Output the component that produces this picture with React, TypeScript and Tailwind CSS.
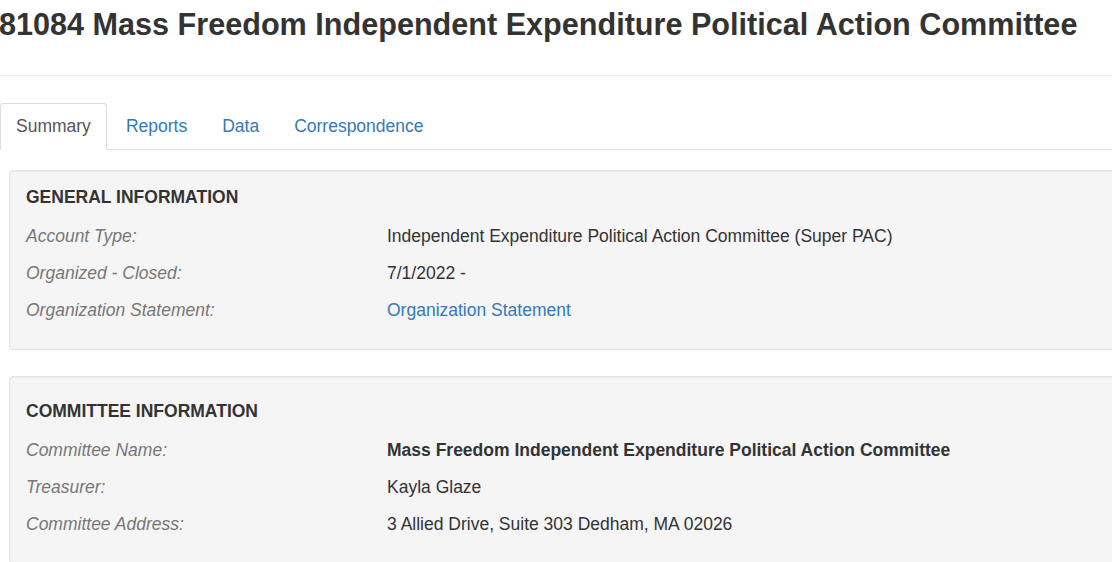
import React from 'react';

const tabs = ['Summary', 'Reports', 'Data', 'Correspondence'];

type Row = { label: string; value: React.ReactNode };

const generalRows: Row[] = [
  { label: 'Account Type:', value: 'Independent Expenditure Political Action Committee (Super PAC)' },
  { label: 'Organized - Closed:', value: '7/1/2022 -' },
  {
    label: 'Organization Statement:',
    value: <a className="text-[#337ab7]" href="#">Organization Statement</a>,
  },
];

const committeeRows: Row[] = [
  {
    label: 'Committee Name:',
    value: <span className="font-bold">Mass Freedom Independent Expenditure Political Action Committee</span>,
  },
  { label: 'Treasurer:', value: 'Kayla Glaze' },
  { label: 'Committee Address:', value: '3 Allied Drive, Suite 303 Dedham, MA 02026' },
];

const InfoWell: React.FC<{ title: string; rows: Row[]; spacing: string }> = ({ title, rows, spacing }) => (
  <section
    className={`ml-[9px] rounded-[4px] border border-[#e3e3e3] bg-[#f5f5f5] pl-4 shadow-[inset_0_1px_1px_rgba(0,0,0,0.05)] ${spacing}`}
  >
    <h4 className="mb-[8px] text-[17.5px] font-bold leading-[25px] text-[#333]">{title}</h4>
    {rows.map((row) => (
      <div key={row.label} className="flex h-[37px] items-center">
        <div className="w-[361px] italic text-[#777]">{row.label}</div>
        <div className="text-[#333]">{row.value}</div>
      </div>
    ))}
  </section>
);

export default function App() {
  return (
    <div className="h-[562px] w-[1112px] overflow-hidden bg-white font-['Liberation_Sans',Arial,sans-serif] text-[17.5px] leading-[25px] text-[#333]">
      <div className="w-[1150px]">
        <h1 className="-ml-[1px] whitespace-nowrap pt-[8px] text-[30.6px] font-bold leading-[33px] text-[#333]">
          81084 Mass Freedom Independent Expenditure Political Action Committee
        </h1>
        <hr className="mt-[34px] border-t border-[#eee]" />

        <ul className="mt-[27px] flex border-b border-[#ddd]">
          {tabs.map((tab, i) => (
            <li key={tab} className="-mb-px mr-[3px]">
              {i === 0 ? (
                <span className="block rounded-t-[4px] border border-[#ddd] border-b-transparent bg-white px-[15px] py-[10px] text-[#555]">
                  {tab}
                </span>
              ) : (
                <a href="#" className="block border border-transparent px-[15px] py-[10px] text-[#337ab7]">
                  {tab}
                </a>
              )}
            </li>
          ))}
        </ul>

        <InfoWell title="GENERAL INFORMATION" rows={generalRows} spacing="mt-[20px] pt-[14px] pb-[20px]" />
        <InfoWell title="COMMITTEE INFORMATION" rows={committeeRows} spacing="mt-[26px] pt-[22px] pb-[20px]" />
      </div>
    </div>
  );
}
